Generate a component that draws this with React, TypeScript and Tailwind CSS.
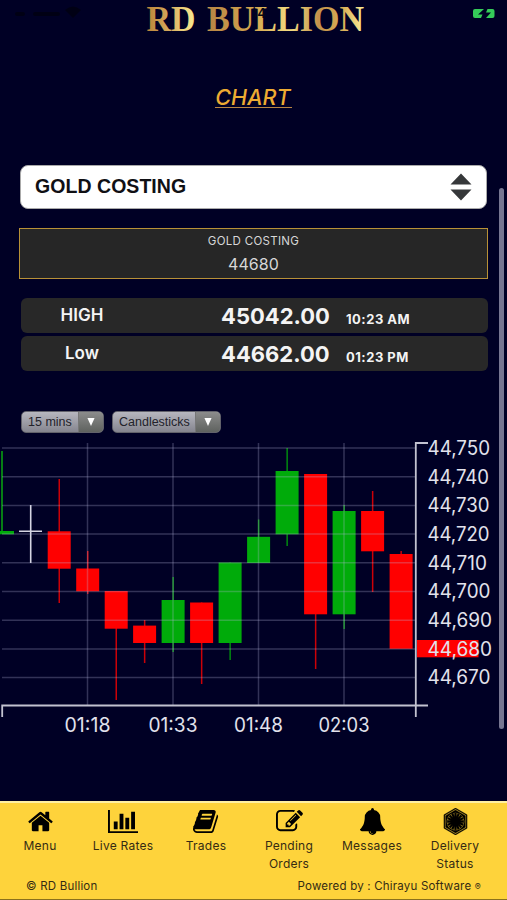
import React from "react";
import { FaFirstOrder } from "react-icons/fa";

type Candle = { x: number; top: number; bottom: number; high: number; low: number; up: boolean };

const GREEN = "#00ab0a";
const RED = "#ff0000";

const candles: Candle[] = [
  { x: 59.2, top: 531.3, bottom: 568.7, high: 479, low: 603, up: false },
  { x: 87.7, top: 568.5, bottom: 591.3, high: 551, low: 594, up: false },
  { x: 116.2, top: 591, bottom: 628.7, high: 591, low: 700, up: false },
  { x: 144.6, top: 625.6, bottom: 643, high: 620, low: 663, up: false },
  { x: 173.1, top: 600, bottom: 643, high: 577, low: 652, up: true },
  { x: 201.6, top: 602.5, bottom: 643, high: 602.5, low: 684, up: false },
  { x: 230.1, top: 562.5, bottom: 643, high: 562.5, low: 660, up: true },
  { x: 258.6, top: 536.8, bottom: 563, high: 519.5, low: 563, up: true },
  { x: 287.1, top: 471, bottom: 534.3, high: 448, low: 546, up: true },
  { x: 315.6, top: 474, bottom: 614.3, high: 474, low: 669, up: false },
  { x: 344.1, top: 511, bottom: 614.3, high: 505, low: 629, up: true },
  { x: 372.6, top: 511, bottom: 551.3, high: 491, low: 592, up: false },
  { x: 401.1, top: 554, bottom: 648.8, high: 551, low: 648, up: false },
];

const prices = [
  { label: "44,750", w: 61.5 },
  { label: "44,740", w: 60.5 },
  { label: "44,730", w: 61 },
  { label: "44,720", w: 61 },
  { label: "44,710", w: 58.5 },
  { label: "44,700", w: 62 },
  { label: "44,690", w: 63.5 },
  { label: "44,680", w: 63.5 },
  { label: "44,670", w: 62 },
];

const times = [
  { label: "01:18", x: 87.5, w: 46 },
  { label: "01:33", x: 173, w: 49 },
  { label: "01:48", x: 258.5, w: 49 },
  { label: "02:03", x: 344, w: 51 },
];

function Chart() {
  return (
    <svg className="block h-[310px] w-[507px] font-[Inter,sans-serif]" viewBox="0 435 507 310">
      <line x1="2" x2="2" y1="451" y2="532" stroke="#078c14" strokeWidth="1.8" />
      <rect x="0" y="531" width="14" height="3.3" fill={GREEN} />
      <path d="M19 531.2H42M30.7 505V563" stroke="#d5d5e3" strokeWidth="1.6" />
      {candles.map((c) => (
        <g key={c.x} fill={c.up ? GREEN : RED}>
          <rect x={c.x - 0.7} y={c.high} width="1.5" height={c.low - c.high} opacity="0.8" />
          <rect x={c.x - 11.5} y={c.top} width="23" height={c.bottom - c.top} />
        </g>
      ))}
      <g stroke="#b9b9df" strokeOpacity="0.27" strokeWidth="1.5">
        {prices.map((p, i) => (
          <line key={p.label} x1="2" x2="416" y1={448 + i * 28.7} y2={448 + i * 28.7} />
        ))}
        {times.map((t) => (
          <line key={t.label} x1={t.x} x2={t.x} y1="443" y2="705" />
        ))}
      </g>
      <path d="M428 443H415.8V717M428 705.5H2.2V717" fill="none" stroke="#c2c2d0" strokeWidth="1.8" />
      <rect x="417" y="640" width="61.5" height="17.3" fill={RED} />
      <g fill="#e2e2ec" fontSize="19.5">
        {prices.map((p, i) => (
          <text key={p.label} x="427.5" y={454.8 + i * 28.7} textLength={p.w + 1} lengthAdjust="spacingAndGlyphs">{p.label}</text>
        ))}
        {times.map((t) => (
          <text key={t.label} x={t.x - t.w / 2} y="731.8" textLength={t.w} lengthAdjust="spacingAndGlyphs">{t.label}</text>
        ))}
      </g>
    </svg>
  );
}

function Glyph({ d, box = 1792 }: { d: string; box?: number }) {
  return (
    <svg viewBox={`0 0 ${box} 1792`} className="h-[27px] w-auto" fill="currentColor">
      <path d={d} />
    </svg>
  );
}

const HOME =
  "M1472 992v480q0 26-19 45t-45 19h-384v-384h-256v384h-384q-26 0-45-19t-19-45v-480q0-1 .5-3t.5-3l575-474 575 474q1 2 1 6zm223-69l-62 74q-8 9-21 11h-3q-13 0-21-7l-692-577-692 577q-12 8-24 7-13-2-21-11l-62-74q-8-10-7-23.500t11-21.500l719-599q32-26 76-26t76 26l244 204v-195q0-14 9-23t23-9h192q14 0 23 9t9 23v408l219 182q10 8 11 21.500t-7 23.500z";
const BARS =
  "M640 896v512h-256v-512h256zm384-512v1024h-256v-1024h256zm1024 1152v128h-2048v-1536h128v1408h1920zm-640-896v768h-256v-768h256zm384-384v1152h-256v-1152h256z";
const BOOK =
  "M1639 478q40 57 18 129l-275 906q-19 64-76.500 107.500t-122.500 43.500h-923q-77 0-148.500-53.500t-99.500-131.500q-24-67-2-127 0-4 3-27t4-37q1-8-3-21.500t-3-19.500q2-11 8-21t16.500-23.500 16.500-23.500q23-38 45-91.500t30-91.500q3-10 .5-30t-.5-28q3-11 17-28t17-23q21-36 42-92t25-90q1-9-2.500-32t.5-28q4-13 22-30.500t22-22.500q19-26 42.500-84.500t27.500-96.500q1-8-3-25.500t-2-26.500q2-8 9-18t18-23 17-21q8-12 16.500-30.500t15-35 16-36 19.500-32 26.500-23.500 36-11.500 47.500 5.500l-1 3q38-9 51-9h761q74 0 114 56t18 130l-274 906q-36 119-71.500 153.500t-128.500 34.500h-869q-27 0-38 15-11 16-1 43 24 70 144 70h923q29 0 56-15.500t35-41.500l300-987q7-22 5-57 38 15 59 43zm-1064 2q-4 13 2 22.500t20 9.500h608q13 0 25.500-9.500t16.500-22.500l21-64q4-13-2-22.500t-20-9.500h-608q-13 0-25.500 9.500t-16.500 22.500zm-83 256q-4 13 2 22.500t20 9.500h608q13 0 25.500-9.500t16.500-22.500l21-64q4-13-2-22.500t-20-9.500h-608q-13 0-25.500 9.500t-16.500 22.500z";
const EDIT =
  "M888 1184l116-116-152-152-116 116v56h96v96h56zm440-720q-16-16-33 1l-350 350q-17 17-1 33t33-1l350-350q17-17 1-33zm80 594v190q0 119-84.500 203.500t-203.500 84.500h-832q-119 0-203.500-84.500t-84.500-203.500v-832q0-119 84.500-203.500t203.500-84.500h832q63 0 117 25 15 7 18 23 3 17-9 29l-49 49q-14 14-32 8-23-6-45-6h-832q-66 0-113 47t-47 113v832q0 66 47 113t113 47h832q66 0 113-47t47-113v-126q0-13 9-22l64-64q15-15 35-7t20 29zm-96-738l288 288-672 672h-288v-288zm444 132l-92 92-288-288 92-92q28-28 68-28t68 28l152 152q28 28 28 68t-28 68z";
const BELL =
  "M912 1696q0-16-16-16-59 0-101.500-42.500t-42.500-101.500q0-16-16-16t-16 16q0 73 51.500 124.500t124.500 51.500q16 0 16-16zm816-288q0 52-38 90t-90 38h-448q0 106-75 181t-181 75-181-75-75-181h-448q-52 0-90-38t-38-90q50-42 91-88t85-119.500 74.500-158.500 50-206 19.500-260q0-152 117-282.500t307-158.500q-8-19-8-39 0-40 28-68t68-28 68 28 28 68q0 20-8 39 190 28 307 158.500t117 282.500q0 139 19.500 260t50 206 74.500 158.500 85 119.500 91 88z";

const nav: { label: string; icon: React.ReactNode }[] = [
  { label: "Menu", icon: <Glyph d={HOME} /> },
  { label: "Live Rates", icon: <Glyph d={BARS} box={2048} /> },
  { label: "Trades", icon: <Glyph d={BOOK} /> },
  { label: "Pending Orders", icon: <Glyph d={EDIT} /> },
  { label: "Messages", icon: <Glyph d={BELL} /> },
  { label: "Delivery Status", icon: <FaFirstOrder className="size-[27px]" stroke="currentColor" strokeWidth="7" /> },
];

function Header() {
  return (
    <svg className="block h-10 w-full shrink-0" viewBox="0 0 507 40">
      <defs>
        <linearGradient id="gold" gradientUnits="userSpaceOnUse" x1="146" x2="364" y1="0" y2="0">
          <stop offset="0" stopColor="#b98238" />
          <stop offset="0.1" stopColor="#d4a75a" />
          <stop offset="0.21" stopColor="#f6e58c" />
          <stop offset="0.3" stopColor="#b98745" />
          <stop offset="0.5" stopColor="#d5a84f" />
          <stop offset="0.66" stopColor="#f3dc82" />
          <stop offset="0.79" stopColor="#c4924b" />
          <stop offset="0.9" stopColor="#d7ac55" />
          <stop offset="1" stopColor="#fbef9a" />
        </linearGradient>
      </defs>
      <g fill="url(#gold)" className="font-['Liberation_Serif',serif]" fontSize="36.5" fontWeight="700">
        <text x="146.500" y="31" textLength="49" lengthAdjust="spacingAndGlyphs">RD</text>
        <text x="207" y="31" textLength="157" lengthAdjust="spacingAndGlyphs">BULLION</text>
      </g>
      <g fill="#00000f" opacity="0.75">
        <rect x="15" y="12" width="10" height="4" rx="2" />
        <rect x="33" y="12" width="27" height="4" rx="2" />
        <path d="M65 10Q73 3 81 10L73 18Z" />
      </g>
      <text x="253" y="18" fontSize="13" fontWeight="600" className="font-[Inter,sans-serif]" fill="#080714">:4</text>
      <path d="M475 9H484L478 14.500H482.500L481 18H475Q473 18 473 16V11Q473 9 475 9ZM487.500 9H492.500Q494.500 9 494.500 11V16Q494.500 18 492.500 18H486L491 12.500H486Z" fill="#35cb59" />
    </svg>
  );
}

function Range({ label, value, time }: { label: string; value: string; time: string }) {
  return (
    <div className="flex h-[35px] items-center rounded-md bg-[#282828] font-bold text-[#f4f4f4]">
      <span className="w-[122px] text-center text-[17px] font-semibold">{label}</span>
      <span className="ml-[78px] w-[125px] pt-0.5 text-[22px]">{value}</span>
      <span className="pt-2 text-[13px] tracking-[0.5px]">{time}</span>
    </div>
  );
}

function Picker({ label, wide }: { label: string; wide?: boolean }) {
  return (
    <div className={`flex h-[22px] overflow-hidden rounded-[5px] border border-[#62626b] bg-linear-to-b from-[#b7b7bf] to-[#85858f] font-['Liberation_Sans',Arial,sans-serif] ${wide ? "w-[109px]" : "w-[83px]"}`}>
      <span className="grow whitespace-nowrap pl-1.5 text-[12.5px] leading-5 text-[#22222b]">{label}</span>
      <span className="flex w-[25px] items-center justify-center border-l border-[#777] bg-linear-to-b from-[#8c8c8c] to-[#5f625f]">
        <svg viewBox="0 0 10 9" className="h-2 w-2.5" fill="white"><path d="M1 0H9L5 9Z" /></svg>
      </span>
    </div>
  );
}

export default function App() {
  return (
    <div className="relative flex h-[900px] w-[507px] flex-col overflow-hidden bg-[#000025] font-[Inter,sans-serif]">
      <Header />
      <h1 className="mt-[41px] flex h-8 shrink-0 justify-center text-[21.5px] leading-8 text-[#edab32] italic">
        <span className="h-[27px] border-b-[1.5px] border-[#b98543] pr-px font-medium tracking-[0.1px]">CHART</span>
      </h1>
      <div className="mx-5 mt-[52px] flex h-11 shrink-0 items-center justify-between rounded-lg border border-[#aaa] bg-white pr-3.5 pl-3.5">
        <span className="font-['Liberation_Sans',Arial,sans-serif] text-[19.5px] font-bold tracking-[0.05px] text-[#101014]">GOLD COSTING</span>
        <svg viewBox="0 0 22 28" className="h-7 w-[22px]" fill="#36383a"><path d="M11 0.500L21.500 11.500H0.500ZM0.500 16.500H21.500L11 27.500Z" /></svg>
      </div>
      <div className="mx-[19px] mt-[19px] flex h-[51px] shrink-0 flex-col items-center border-[1.5px] border-[#b89137] bg-[#262626] pt-[3px] text-[#d7d7d7]">
        <span className="text-[11.5px] leading-[18px] tracking-[0.3px]">GOLD COSTING</span>
        <span className="text-base leading-7 tracking-[0.1px]">44680</span>
      </div>
      <div className="mr-[19px] ml-[21px] mt-[19px] flex shrink-0 flex-col gap-[3px]">
        <Range label="HIGH" value="45042.00" time="10:23 AM" />
        <Range label="Low" value="44662.00" time="01:23 PM" />
      </div>
      <div className="mt-10 flex shrink-0 gap-2 pl-[21px]">
        <Picker label="15 mins" />
        <Picker label="Candlesticks" wide />
      </div>
      <div className="mt-0.5 shrink-0"><Chart /></div>
      <footer className="mt-auto flex h-[99px] shrink-0 flex-col border-t-2 border-b border-t-[#fff0a1] border-b-[#8a711c] bg-[#fed33b] text-[#352b13]">
        <nav className="-ml-[1.5px] grid h-[70px] grid-cols-[83px_83px_83px_83px_83px_83px]">
          {nav.map((n) => (
            <div key={n.label} className="flex flex-col items-center pt-[5px]">
              <span className="flex h-[27px] text-black">{n.icon}</span>
              <span className="mt-0.5 max-w-[68px] text-center text-[12px] leading-[18px] tracking-[0.25px]">{n.label}</span>
            </div>
          ))}
        </nav>
        <div className="flex justify-between pt-1 pr-[26px] pl-[26px] text-[11.5px] leading-[18px]">
          <span className="tracking-[0.2px]">© RD Bullion</span>
          <span className="tracking-[0.2px]">Powered by : Chirayu Software <span className="text-[9px]">®</span></span>
        </div>
      </footer>
      <div className="absolute top-[188px] left-[499px] h-[541px] w-[5px] rounded-sm bg-[#777691]" />
    </div>
  );
}
